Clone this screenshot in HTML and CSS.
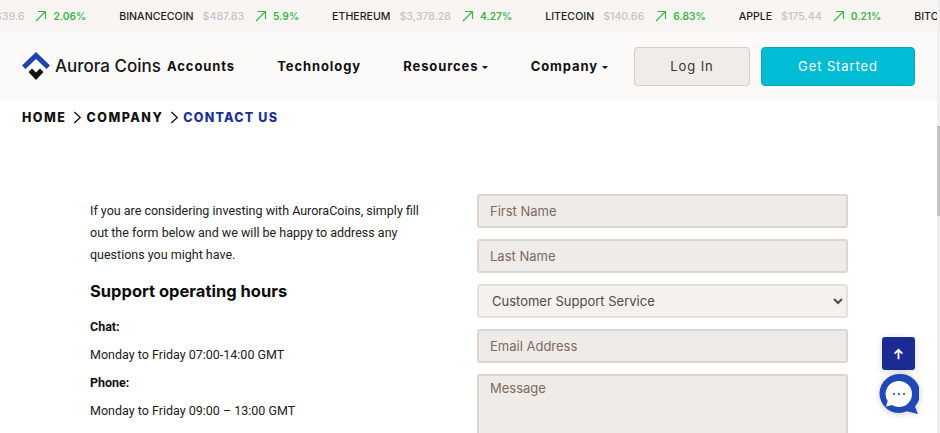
FILE: index.html
```html
<!DOCTYPE html>
<html lang="en">
<head>
    <meta charset="UTF-8">
    <meta name="viewport" content="width=device-width, initial-scale=1.0">
    <title>Contact Us</title>
    <link rel="stylesheet" href="styles.css">
</head>
<body>
    <div class="ticker">
        <div class="ticker-track">
            <div class="coin"><span class="coin-price">$39.6</span><svg class="coin-arrow" viewBox="0 0 12 12"><path d="M1 11 10.5 1.5M3 1.5h7.5V9"/></svg><span class="coin-change">2.06%</span></div>
            <div class="coin"><span class="coin-name">BINANCECOIN</span><span class="coin-price">$487.83</span><svg class="coin-arrow" viewBox="0 0 12 12"><path d="M1 11 10.5 1.5M3 1.5h7.5V9"/></svg><span class="coin-change">5.9%</span></div>
            <div class="coin"><span class="coin-name">ETHEREUM</span><span class="coin-price">$3,378.28</span><svg class="coin-arrow" viewBox="0 0 12 12"><path d="M1 11 10.5 1.5M3 1.5h7.5V9"/></svg><span class="coin-change">4.27%</span></div>
            <div class="coin"><span class="coin-name">LITECOIN</span><span class="coin-price">$140.66</span><svg class="coin-arrow" viewBox="0 0 12 12"><path d="M1 11 10.5 1.5M3 1.5h7.5V9"/></svg><span class="coin-change">6.83%</span></div>
            <div class="coin"><span class="coin-name">APPLE</span><span class="coin-price">$175.44</span><svg class="coin-arrow" viewBox="0 0 12 12"><path d="M1 11 10.5 1.5M3 1.5h7.5V9"/></svg><span class="coin-change">0.21%</span></div>
            <div class="coin"><span class="coin-name">BITCOIN</span></div>
        </div>
    </div>

    <header class="site-header">
        <a class="logo" href="#">
            <svg class="logo-mark" viewBox="0 0 28 28">
                <path class="logo-top" d="M14 0 28 13.5 24.5 17 14 7 3.500 17 0 13.5Z"/>
                <path class="logo-bottom" d="M6.500 20 10 16.500 14 20.500 18 16.500 21.500 20 14 28Z"/>
            </svg>
            <span class="logo-text">Aurora Coins</span>
        </a>
        <nav class="main-nav">
            <a href="#">Accounts</a>
            <a href="#">Technology</a>
            <a href="#" class="has-caret">Resources</a>
            <a href="#" class="has-caret">Company</a>
        </nav>
        <div class="header-actions">
            <a href="#" class="btn btn-login">Log In</a>
            <a href="#" class="btn btn-start">Get Started</a>
        </div>
    </header>

    <div class="breadcrumb">
        <a href="#">HOME</a>
        <svg class="crumb-sep" viewBox="0 0 10 14"><path d="M1.500 1 8 7 1.500 13"/></svg>
        <a href="#">COMPANY</a>
        <svg class="crumb-sep" viewBox="0 0 10 14"><path d="M1.500 1 8 7 1.500 13"/></svg>
        <span class="crumb-current">CONTACT US</span>
    </div>

    <main class="contact">
        <section class="contact-info">
            <p class="intro">If you are considering investing with AuroraCoins, simply fill out the form below and we will be happy to address any questions you might have.</p>
            <h2>Support operating hours</h2>
            <p class="hours"><strong>Chat:</strong></p>
            <p class="hours">Monday to Friday 07:00-14:00 GMT</p>
            <p class="hours"><strong>Phone:</strong></p>
            <p class="hours">Monday to Friday 09:00 – 13:00 GMT</p>
        </section>
        <form class="contact-form">
            <input type="text" placeholder="First Name">
            <input type="text" placeholder="Last Name">
            <select>
                <option>Customer Support Service</option>
            </select>
            <input type="text" placeholder="Email Address">
            <textarea placeholder="Message"></textarea>
        </form>
    </main>

    <a href="#" class="to-top">
        <svg viewBox="0 0 12 14"><path d="M6 13V2M1.500 6.500 6 2l4.500 4.500"/></svg>
    </a>
    <a href="#" class="chat-bubble">
        <svg viewBox="0 0 40 40">
            <path class="bubble-outer" d="M20 0a19.500 19.500 0 1 0 8 37.300L39 40l-3-7.500A19.500 19.500 0 0 0 20 0Z"/>
            <path class="bubble-inner" d="M20 7a13 13 0 0 1 0 26c-2.600 0-5-.7-7-2l-6 1.500 1.700-5.500A13 13 0 0 1 20 7Z"/>
            <circle cx="15" cy="20" r="1.100"/>
            <circle cx="20" cy="20" r="1.100"/>
            <circle cx="25" cy="20" r="1.100"/>
        </svg>
    </a>

    <div class="scrollbar"><div class="scrollbar-thumb"></div></div>
</body>
</html>
```

FILE: styles.css
```css
html, body {
    height: 100%;
}

body {
    margin: 0;
    overflow: hidden;
    background-color: #ffffff;
    font-family: 'Roboto', sans-serif;
    color: #212121;
}

a {
    text-decoration: none;
    color: inherit;
}

/* ticker */
.ticker {
    height: 32px;
    background-color: #f8f5f3;
    overflow: hidden;
}

.ticker-track {
    display: flex;
    align-items: center;
    height: 32px;
    gap: 33px;
    white-space: nowrap;
    transform: translateX(-5px);
    font-family: 'Inter', sans-serif;
    font-size: 10.6px;
    font-weight: 500;
}

.coin {
    display: flex;
    align-items: center;
    flex-shrink: 0;
}

.coin-name {
    color: #1d1d1f;
    margin-right: 9px;
}

.coin-price {
    color: #c3c5cc;
    margin-right: 11px;
}

.coin-arrow {
    width: 12px;
    height: 12px;
    margin-right: 6px;
    fill: none;
    stroke: #39b54a;
    stroke-width: 1.2;
}

.coin-change {
    color: #39b54a;
    font-size: 10.2px;
    font-weight: 600;
}

/* header */
.site-header {
    display: flex;
    align-items: center;
    height: 68px;
    margin-right: 3px;
    padding: 0 22px;
    box-sizing: border-box;
    background-color: #fcfaf9;
}

.logo {
    display: flex;
    align-items: center;
    width: 145px;
    flex-shrink: 0;
}

.logo-mark {
    width: 28px;
    height: 28px;
    margin-right: 5px;
}

.logo-top {
    fill: #1f45ad;
}

.logo-bottom {
    fill: #111111;
}

.logo-text {
    font-family: 'Inter', sans-serif;
    font-size: 17px;
    font-weight: 500;
    color: #16161a;
    white-space: nowrap;
}

.main-nav {
    display: flex;
    width: 467px;
    justify-content: space-between;
    padding-right: 26px;
    box-sizing: border-box;
    font-family: 'Inter', sans-serif;
    font-size: 13px;
    font-weight: 700;
    letter-spacing: 0.9px;
    color: #111111;
}

.has-caret::after {
    content: "";
    display: inline-block;
    margin-left: 4px;
    vertical-align: middle;
    border-top: 3px solid #111111;
    border-left: 3px solid transparent;
    border-right: 3px solid transparent;
}

.header-actions {
    display: flex;
    gap: 11px;
}

.btn {
    display: flex;
    align-items: center;
    justify-content: center;
    height: 39px;
    box-sizing: border-box;
    border-radius: 4px;
    font-family: 'Inter', sans-serif;
    font-size: 13px;
    letter-spacing: 0.9px;
}

.btn-login {
    width: 116px;
    background-color: #f0ece9;
    border: 1px solid #d6ccc6;
    color: #3a3433;
}

.btn-start {
    width: 154px;
    background-color: #00bcd4;
    border: 1px solid #06a5bb;
    color: #ffffff;
}

/* breadcrumb */
.breadcrumb {
    display: flex;
    align-items: center;
    height: 35px;
    padding-left: 22px;
    font-family: 'Inter', sans-serif;
    font-size: 12.5px;
    font-weight: 800;
    letter-spacing: 1.5px;
    color: #111111;
}

.crumb-sep {
    width: 9px;
    height: 13px;
    margin: 0 4px 0 7px;
    fill: none;
    stroke: #111111;
    stroke-width: 1.5;
}

.crumb-current {
    color: #1c3196;
    letter-spacing: 1.2px;
}

/* contact section */
.contact {
    display: flex;
    padding: 59px 0 0 90px;
}

.contact-info {
    width: 387px;
    flex-shrink: 0;
    padding-top: 6px;
    box-sizing: border-box;
    font-size: 12.5px;
}

.intro {
    width: 335px;
    margin: 0 0 12px;
    line-height: 22px;
}

.contact-info h2 {
    margin: 0 0 12px;
    font-family: 'Inter', sans-serif;
    font-size: 16.5px;
    font-weight: 700;
    line-height: 26px;
    color: #0c0c0c;
}

.hours {
    margin: 0 0 6px;
    line-height: 22px;
}

.hours strong {
    font-weight: 700;
    color: #111111;
}

.contact-form {
    display: flex;
    flex-direction: column;
    gap: 11px;
    width: 371px;
}

.contact-form input,
.contact-form select,
.contact-form textarea {
    display: block;
    width: 100%;
    height: 34px;
    margin: 0;
    padding: 0 11px;
    box-sizing: border-box;
    background-color: #efebe8;
    border: 2px solid #ddd5cf;
    border-radius: 3px;
    outline: none;
    font-family: 'Inter', sans-serif;
    font-size: 13px;
    color: #544a44;
}

.contact-form input::placeholder,
.contact-form textarea::placeholder {
    color: #7c6a5e;
    opacity: 1;
}

.contact-form select {
    padding-left: 9px;
    background-color: #f4f1ef;
    border-color: #e6e0dc;
    color: #514c49;
}

.contact-form textarea {
    height: 90px;
    padding-top: 4px;
    resize: none;
}

/* floating buttons */
.to-top {
    position: fixed;
    left: 882px;
    top: 337px;
    display: flex;
    align-items: center;
    justify-content: center;
    width: 33px;
    height: 33px;
    background-color: #1a2b94;
    border-radius: 3px;
    box-shadow: 0 2px 8px rgba(0, 0, 0, 0.15);
}

.to-top svg {
    width: 11px;
    height: 12px;
    fill: none;
    stroke: #ffffff;
    stroke-width: 2.2;
}

.chat-bubble {
    position: fixed;
    left: 879px;
    top: 374px;
    width: 40px;
    height: 40px;
    filter: drop-shadow(0 1px 3px rgba(0, 0, 0, 0.2));
}

.chat-bubble svg {
    display: block;
    width: 40px;
    height: 40px;
}

.bubble-outer {
    fill: #2049b8;
}

.bubble-inner {
    fill: #ffffff;
}

.chat-bubble circle {
    fill: #2049b8;
}

/* fake page scrollbar, the shot was taken with one showing */
.scrollbar {
    position: fixed;
    top: 0;
    right: 0;
    width: 3px;
    height: 100%;
    background-color: #f1f0f1;
}

.scrollbar-thumb {
    height: 90px;
    margin-top: 126px;
    background-color: #c1c1c1;
}
```
